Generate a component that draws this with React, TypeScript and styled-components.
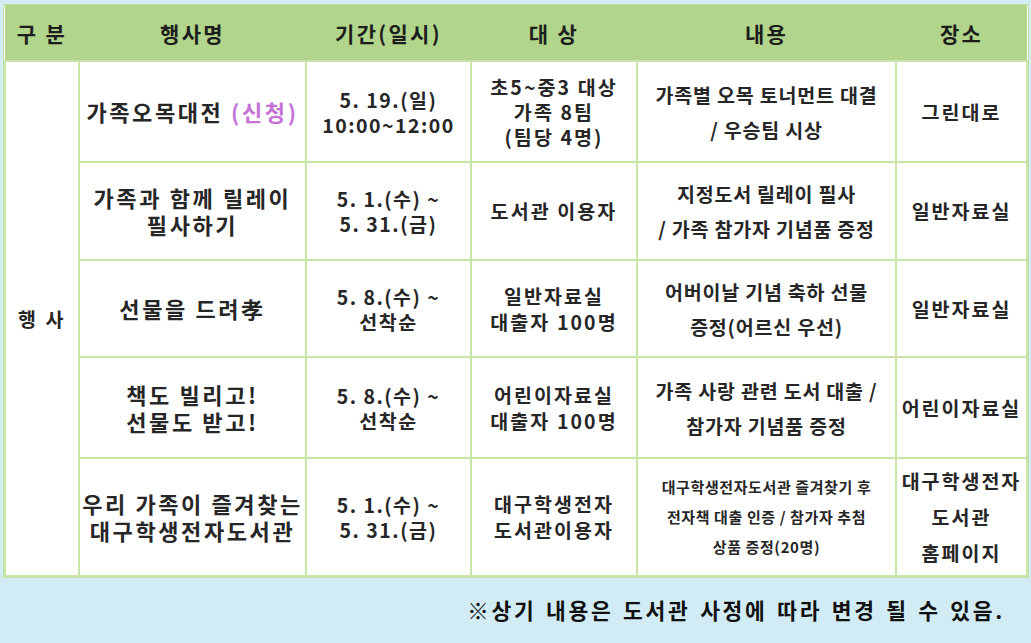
import React from 'react';
import styled, { createGlobalStyle } from 'styled-components';

// === STYLED COMPONENTS ===

const GlobalStyle = createGlobalStyle`
  html, body {
    margin: 0;
    padding: 0;
    background: #d2ecf5;
  }
  body {
    font-family: "Noto Sans CJK KR", "Noto Sans", sans-serif;
    color: #222;
  }
`;

const Page = styled.div`
  width: 1031px;
  height: 643px;
  padding: 5px 5px 0 4px;
  box-sizing: border-box;
  overflow: hidden;
`;

const Table = styled.table`
  width: 1022px;
  table-layout: fixed;
  border-collapse: collapse;
  background: #fff;
  outline: 1px solid #c2e0a2;
`;

const HeadRow = styled.tr`
  height: 56px;
  background: #b1d58a;
`;

const HeadCell = styled.th`
  padding: 0;
  text-align: center;
  vertical-align: middle;
  font-size: 21px;
  font-weight: 700;
  letter-spacing: 2.3px;
  color: #1d1d1d;
  border-bottom: 2px solid #c8e4ab;
`;

const BodyRow = styled.tr``;

const Cell = styled.td<{ $line?: number; $size?: number; $track?: number }>`
  padding: 0 1px;
  text-align: center;
  vertical-align: middle;
  font-size: ${(p) => p.$size ?? 19.5}px;
  font-weight: 700;
  letter-spacing: ${(p) => p.$track ?? 2}px;
  line-height: ${(p) => p.$line ?? 25}px;
  color: #262626;
  border: 2px solid #c8e5aa;
  border-top: none;
`;

const NameCell = styled(Cell)`
  font-size: 22px;
  letter-spacing: 2.6px;
  line-height: 27px;
`;

const Line = styled.div`
  white-space: nowrap;
`;

const Apply = styled.span`
  color: #c571d6;
`;

const Note = styled.div`
  padding: 17px 21px 0 0;
  text-align: right;
  font-size: 21.5px;
  font-weight: 700;
  letter-spacing: 2.7px;
  word-spacing: 2px;
  color: #111;
`;

// === DONNÉES ===

interface EventRow {
  name: string[];
  apply?: boolean;
  period: string[];
  target: string[];
  targetLine?: number;
  content: string[];
  contentLine?: number;
  contentSize?: number;
  place: string[];
  placeLine?: number;
  height: number;
}

const rows: EventRow[] = [
  {
    name: ['가족오목대전'],
    apply: true,
    period: ['5. 19.(일)', '10:00~12:00'],
    target: ['초5~중3 대상', '가족 8팀', '(팀당 4명)'],
    targetLine: 25,
    content: ['가족별 오목 토너먼트 대결', '/ 우승팀 시상'],
    place: ['그린대로'],
    height: 101,
  },
  {
    name: ['가족과 함께 릴레이', '필사하기'],
    period: ['5. 1.(수) ~', '5. 31.(금)'],
    target: ['도서관 이용자'],
    content: ['지정도서 릴레이 필사', '/ 가족 참가자 기념품 증정'],
    place: ['일반자료실'],
    height: 98,
  },
  {
    name: ['선물을 드려孝'],
    period: ['5. 8.(수) ~', '선착순'],
    target: ['일반자료실', '대출자 100명'],
    content: ['어버이날 기념 축하 선물', '증정(어르신 우선)'],
    place: ['일반자료실'],
    height: 97,
  },
  {
    name: ['책도 빌리고!', '선물도 받고!'],
    period: ['5. 8.(수) ~', '선착순'],
    target: ['어린이자료실', '대출자 100명'],
    content: ['가족 사랑 관련 도서 대출 /', '참가자 기념품 증정'],
    place: ['어린이자료실'],
    height: 101,
  },
  {
    name: ['우리 가족이 즐겨찾는', '대구학생전자도서관'],
    period: ['5. 1.(수) ~', '5. 31.(금)'],
    target: ['대구학생전자', '도서관이용자'],
    content: ['대구학생전자도서관 즐겨찾기 후', '전자책 대출 인증 / 참가자 추첨', '상품 증정(20명)'],
    contentLine: 30,
    contentSize: 15,
    place: ['대구학생전자', '도서관', '홈페이지'],
    placeLine: 36,
    height: 118,
  },
];

const lines = (items: string[]) => items.map((l) => <Line key={l}>{l}</Line>);

const App: React.FC = () => {
  return (
    <Page>
      <GlobalStyle />
      <Table>
        <colgroup>
          <col style={{ width: 74 }} />
          <col style={{ width: 227 }} />
          <col style={{ width: 165 }} />
          <col style={{ width: 166 }} />
          <col style={{ width: 259 }} />
          <col style={{ width: 131 }} />
        </colgroup>
        <thead>
          <HeadRow>
            <HeadCell>구 분</HeadCell>
            <HeadCell>행사명</HeadCell>
            <HeadCell>기간(일시)</HeadCell>
            <HeadCell>대 상</HeadCell>
            <HeadCell>내용</HeadCell>
            <HeadCell>장소</HeadCell>
          </HeadRow>
        </thead>
        <tbody>
          {rows.map((row, i) => (
            <BodyRow key={i} style={{ height: row.height }}>
              {i === 0 && (
                <Cell rowSpan={rows.length} $track={2.5}>
                  행 사
                </Cell>
              )}
              <NameCell>
                {row.apply ? (
                  <Line>
                    {row.name[0]} <Apply>(신청)</Apply>
                  </Line>
                ) : (
                  lines(row.name)
                )}
              </NameCell>
              <Cell $line={25} $track={1.5}>
                {lines(row.period)}
              </Cell>
              <Cell $line={row.targetLine ?? 26} $track={2.1}>
                {lines(row.target)}
              </Cell>
              <Cell
                $line={row.contentLine ?? 35}
                $size={row.contentSize}
                $track={row.contentSize ? 0.6 : 0.8}
              >
                {lines(row.content)}
              </Cell>
              <Cell $line={row.placeLine ?? 26} $track={2}>
                {lines(row.place)}
              </Cell>
            </BodyRow>
          ))}
        </tbody>
      </Table>
      <Note>※상기 내용은 도서관 사정에 따라 변경 될 수 있음.</Note>
    </Page>
  );
};

export default App;
